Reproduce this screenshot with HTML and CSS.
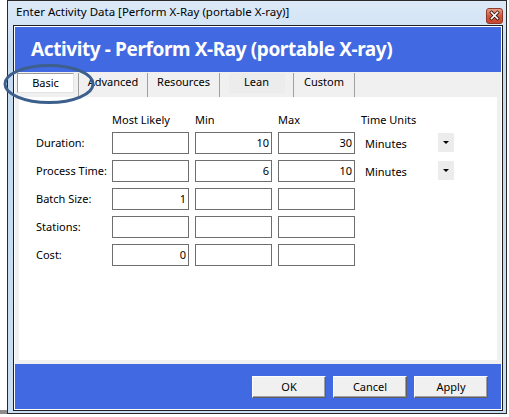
FILE: index.html
```html
<!DOCTYPE html>
<html>
<head>
<meta charset="utf-8">
<link rel="stylesheet" href="styles.css">
</head>
<body>
<div class="window">
  <div class="titlebar">
    <span class="title-text">Enter Activity Data [Perform X-Ray (portable X-ray)]</span>
    <span class="close">
      <svg width="17" height="16" viewBox="0 0 17 16">
        <defs>
          <linearGradient id="cg" x1="0" y1="0" x2="0" y2="1">
            <stop offset="0" stop-color="#e9a58f"/>
            <stop offset="0.5" stop-color="#d0573d"/>
            <stop offset="1" stop-color="#c8452c"/>
          </linearGradient>
        </defs>
        <rect x="0.5" y="0.5" width="16" height="15" rx="2.5" fill="url(#cg)" stroke="#8f3a2a"/>
        <path d="M5.5 4.5 L11.5 10.5 M11.5 4.5 L5.5 10.5" stroke="#3a1a14" stroke-width="3.2" stroke-linecap="square"/>
        <path d="M5.5 4.5 L11.5 10.5 M11.5 4.5 L5.5 10.5" stroke="#ffffff" stroke-width="1.6" stroke-linecap="square"/>
      </svg>
    </span>
  </div>
  <div class="client">
    <div class="inner">
      <div class="header">Activity - Perform X-Ray (portable X-ray)</div>
      <div class="body">
        <div class="tabs">
          <div class="tab tab-basic"><span class="tab-sel">Basic</span></div>
          <div class="tab tab-adv">Advanced</div>
          <div class="tab tab-res">Resources</div>
          <div class="tab tab-lean"><span class="tab-hover">Lean</span></div>
          <div class="tab tab-cus">Custom</div>
        </div>
        <div class="panel">
          <div class="form">
            <div class="hd"></div>
            <div class="hd">Most Likely</div>
            <div class="hd">Min</div>
            <div class="hd">Max</div>
            <div class="hd">Time Units</div>

            <div class="lbl">Duration:</div>
            <div class="inp"></div>
            <div class="inp">10</div>
            <div class="inp">30</div>
            <div class="sel"><span>Minutes</span><span class="arrow"><i></i></span></div>

            <div class="lbl">Process Time:</div>
            <div class="inp"></div>
            <div class="inp">6</div>
            <div class="inp">10</div>
            <div class="sel"><span>Minutes</span><span class="arrow"><i></i></span></div>

            <div class="lbl">Batch Size:</div>
            <div class="inp">1</div>
            <div class="inp"></div>
            <div class="inp"></div>
            <div></div>

            <div class="lbl">Stations:</div>
            <div class="inp"></div>
            <div class="inp"></div>
            <div class="inp"></div>
            <div></div>

            <div class="lbl">Cost:</div>
            <div class="inp">0</div>
            <div class="inp"></div>
            <div class="inp"></div>
            <div></div>
          </div>
        </div>
      </div>
      <div class="footer">
        <div class="btn">OK</div>
        <div class="btn">Cancel</div>
        <div class="btn">Apply</div>
      </div>
    </div>
  </div>
  <svg class="oval" width="100" height="46" viewBox="0 0 100 46">
    <ellipse cx="47" cy="22" rx="44" ry="18.5" fill="none" stroke="#3d5f8c" stroke-width="3"/>
  </svg>
</div>
<div class="shadow"></div>
</body>
</html>
```
FILE: styles.css
```css
* { box-sizing: border-box; }
html, body {
  margin: 0;
  padding: 0;
  background: #ffffff;
}
body {
  font-family: "Noto Sans", "Open Sans", sans-serif;
  font-size: 11px;
  color: #000;
  position: relative;
  width: 509px;
  height: 417px;
  overflow: hidden;
}
.window {
  position: relative;
  margin-left: 7px;
  width: 500px;
  height: 414px;
  border: 1px solid #2a2a2a;
  background: linear-gradient(to bottom, #dce9f7 0px, #d3e4f6 25px, #c4dbf2 60px, #c9def3 100%);
  display: flex;
  flex-direction: column;
}
.titlebar {
  height: 24px;
  display: flex;
  align-items: center;
  justify-content: space-between;
  padding-left: 8px;
  padding-right: 2px;
}
.title-text {
  font-size: 11.5px;
  color: #000;
  line-height: 16px;
  margin-top: -2px;
}
.close {
  display: flex;
  margin-top: 5px;
  margin-right: 1px;
}
.client {
  margin: 0 3px 2px 5px;
  border: 1px solid #1f1f1f;
  padding: 1px;
  background: #ffffff;
  flex: 1;
  display: flex;
}
.inner {
  flex: 1;
  background: #4169e1;
  display: flex;
  flex-direction: column;
}
.header {
  height: 45px;
  line-height: 45px;
  padding-left: 16px;
  color: #fff;
  font-weight: bold;
  font-size: 19px;
  letter-spacing: -0.4px;
  white-space: nowrap;
}
.body {
  background: #f0f0f0;
  display: flex;
  flex-direction: column;
}
.tabs {
  height: 25px;
  display: flex;
  padding-top: 1px;
}
.tab {
  height: 24px;
  border-right: 1px solid #a0a0a0;
  display: flex;
  justify-content: center;
  padding-top: 1px;
  line-height: 16px;
  font-size: 11px;
}
.tab-basic { width: 64px; justify-content: flex-start; padding-top: 0; padding-left: 2px; }
.tab-adv { width: 69px; }
.tab-res { width: 72px; }
.tab-lean { width: 74px; }
.tab-cus { width: 61px; }
.tab-sel {
  width: 57px;
  height: 20px;
  background: #fff;
  border-top: 1px solid #9a9a9a;
  border-left: 1px solid #9a9a9a;
  border-right: 1px solid #e3e3e3;
  border-bottom: 1px solid #e3e3e3;
  text-align: center;
  line-height: 18px;
}
.tab-hover {
  display: block;
  height: 20px;
  width: 56px;
  margin-top: -1px;
  padding-top: 1px;
  text-align: center;
  background: #ececec;
}
.panel {
  margin: 0 4px 4px 4px;
  height: 263px;
  background: #fff;
  padding: 15px 0 0 17px;
}
.form {
  display: grid;
  grid-template-columns: 70px 77px 77px 77px 93px;
  grid-template-rows: 14px repeat(5, 22px);
  column-gap: 6px;
  row-gap: 6px;
  align-items: center;
}
.hd {
  align-self: start;
  line-height: 16px;
  height: 14px;
}
.lbl {
  line-height: 16px;
  white-space: nowrap;
}
.inp {
  height: 22px;
  border: 1px solid #6e6e6e;
  background: #fff;
  text-align: right;
  padding-right: 2px;
  line-height: 20px;
}
.sel {
  height: 22px;
  display: flex;
  align-items: center;
  justify-content: space-between;
  padding-left: 4px;
}
.arrow {
  width: 16px;
  height: 19px;
  background: #ececec;
  display: flex;
  align-items: center;
  justify-content: center;
  margin-top: -2px;
}
.arrow i {
  width: 0;
  height: 0;
  border-left: 3px solid transparent;
  border-right: 3px solid transparent;
  border-top: 3px solid #000;
}
.footer {
  height: 45px;
  display: flex;
  justify-content: flex-end;
  align-items: flex-start;
  gap: 7px;
  padding-top: 12px;
  padding-right: 13px;
}
.btn {
  width: 74px;
  height: 22px;
  background: #f0f0f0;
  border-top: 1px solid #fdfdfd;
  border-left: 1px solid #fdfdfd;
  border-right: 1px solid #5f5f5f;
  border-bottom: 1px solid #5f5f5f;
  box-shadow: inset -1px -1px 0 #a0a0a0;
  text-align: center;
  line-height: 20px;
  font-size: 11px;
}
.oval {
  position: absolute;
  left: -6px;
  top: 61px;
}
.shadow {
  position: absolute;
  left: 0;
  top: 410px;
  width: 7px;
  height: 4px;
  background: #8c8c8c;
}
```
